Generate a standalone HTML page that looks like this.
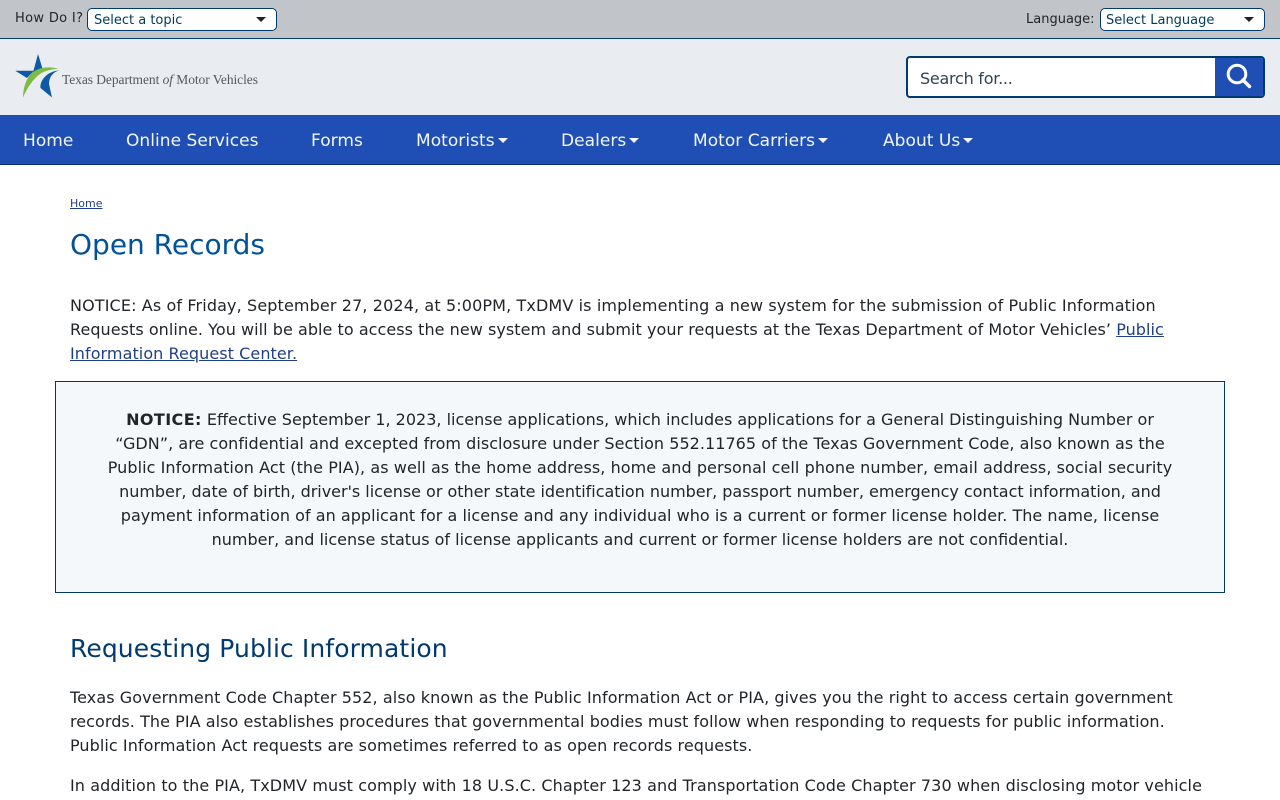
<!DOCTYPE html>
<html lang="en">
<head>
<meta charset="utf-8">
<title>Open Records</title>
<style>
html,body{margin:0;padding:0;background:#fff;width:1280px;height:800px;overflow:hidden}
body{font-family:"DejaVu Sans",Verdana,sans-serif;color:#212529;position:relative}
.a{position:absolute;white-space:nowrap}
.top{left:0;top:0;width:1280px;height:38px;background:#c1c5c9;border-bottom:1px solid #003a6e}
.hdr{left:0;top:39px;width:1280px;height:76px;background:#e9edf1}
.nav{left:0;top:115px;width:1280px;height:49px;background:#1f4eb5;border-bottom:1px solid #0f2f66}
.sel{background:#fff;border:1px solid #003a6e;border-radius:5px;box-sizing:border-box;height:23px;font-size:13px;line-height:23px;color:#003a5c;padding-left:6px}
.sel i{position:absolute;top:8px;width:0;height:0;border-left:5px solid transparent;border-right:5px solid transparent;border-top:5px solid #222}
.lbl{font-size:13px;line-height:18px;color:#212529}
.n{top:116px;font-size:17px;line-height:50px;color:#f2f7ff;letter-spacing:.04px}
.n i{display:inline-block;width:0;height:0;margin-left:3px;vertical-align:3px;border-left:5px solid transparent;border-right:5px solid transparent;border-top:5px solid #f2f7ff}
.t{font-size:16px;line-height:24px;color:#212529}
.c{left:55px;width:1170px;text-align:center}
a{color:#1f3f86;text-decoration:underline}
</style>
</head>
<body>
<div class="a top"></div>
<div class="a lbl" style="left:15px;top:10px;letter-spacing:.33px">How Do I?</div>
<div class="a sel" style="left:87px;top:8px;width:190px">Select a topic<i style="left:168px"></i></div>
<div class="a lbl" style="left:1026px;top:11px">Language:</div>
<div class="a sel" style="left:1100px;top:8px;width:165px;padding-left:5px">Select Language<i style="left:143px"></i></div>

<div class="a hdr"></div>
<svg class="a" style="left:0;top:0" width="70" height="110" viewBox="0 0 70 110">
<path fill="#0f5aa6" d="M38 54 L42.5 68.5 L33 72.5 Z"/>
<path fill="#0f5aa6" d="M15.2 70.7 L34 70.7 L27 78 Z"/>
<path fill="#0f5aa6" d="M59 70.5 C53 72 49 77 49 84 L52 97.5 L40.5 88 C39.5 80 48 71 59 70.5 Z"/>
<path fill="#7dbb42" d="M58.5 69 C50 66 40 67 33 72 C26 78 23 88 23 97.5 C27 88 33 79 40 74 C45 70.5 52 69 58.5 69 Z"/>
</svg>
<div class="a" style="left:62px;top:72px;font-family:'Liberation Serif',serif;font-size:13.5px;line-height:16px;color:#55595c;letter-spacing:-.07px">Texas Department <em>of</em> Motor Vehicles</div>

<div class="a" style="left:906px;top:56px;width:359px;height:42px;box-sizing:border-box;border:2px solid #003a6e;border-radius:4px;background:#fff;overflow:hidden">
<div class="a" style="left:12px;top:9px;font-size:16px;line-height:24px;color:#2f4356;letter-spacing:-.25px">Search for...</div>
<div class="a" style="left:307px;top:0;width:48px;height:38px;background:#1f4eb5"></div>
<svg class="a" style="left:318px;top:5px" width="27" height="27" viewBox="0 0 27 27"><circle cx="11" cy="11" r="8.8" fill="none" stroke="#fff" stroke-width="3"/><path d="M17 17 L23.5 23.5" stroke="#fff" stroke-width="3.4" stroke-linecap="round"/></svg>
</div>

<div class="a nav"></div>
<div class="a n" style="left:23px">Home</div>
<div class="a n" style="left:126px">Online Services</div>
<div class="a n" style="left:311px">Forms</div>
<div class="a n" style="left:416px">Motorists<i></i></div>
<div class="a n" style="left:561px">Dealers<i></i></div>
<div class="a n" style="left:693px">Motor Carriers<i></i></div>
<div class="a n" style="left:883px">About Us<i></i></div>

<a class="a" style="left:70px;top:197px;font-size:11px;line-height:14px" href="#">Home</a>
<div class="a" style="left:70px;top:226px;font-size:28px;line-height:38px;color:#00539b">Open Records</div>

<div class="a t" style="left:70px;top:294px;letter-spacing:.122px">NOTICE: As of Friday, September 27, 2024, at 5:00PM, TxDMV is implementing a new system for the submission of Public Information</div>
<div class="a t" style="left:70px;top:318px;letter-spacing:.046px">Requests online. You will be able to access the new system and submit your requests at the Texas Department of Motor Vehicles’ <a href="#">Public</a></div>
<div class="a t" style="left:70px;top:342px;letter-spacing:.07px"><a href="#">Information Request Center.</a></div>

<div class="a" style="left:55px;top:381px;width:1170px;height:212px;box-sizing:border-box;background:#f4f8fb;border:1px solid #003a5c"></div>
<div class="a t c" style="top:408px"><b style="letter-spacing:.4px">NOTICE:</b> Effective September 1, 2023, license applications, which includes applications for a General Distinguishing Number or</div>
<div class="a t c" style="top:432px;letter-spacing:.04px">“GDN”, are confidential and excepted from disclosure under Section 552.11765 of the Texas Government Code, also known as the</div>
<div class="a t c" style="top:456px;letter-spacing:.07px">Public Information Act (the PIA), as well as the home address, home and personal cell phone number, email address, social security</div>
<div class="a t c" style="top:480px;letter-spacing:-.023px">number, date of birth, driver's license or other state identification number, passport number, emergency contact information, and</div>
<div class="a t c" style="top:504px;letter-spacing:.03px">payment information of an applicant for a license and any individual who is a current or former license holder. The name, license</div>
<div class="a t c" style="top:528px">number, and license status of license applicants and current or former license holders are not confidential.</div>

<div class="a" style="left:70px;top:632px;font-size:25px;line-height:34px;color:#003a6e;letter-spacing:.1px">Requesting Public Information</div>
<div class="a t" style="left:70px;top:686px;letter-spacing:.083px">Texas Government Code Chapter 552, also known as the Public Information Act or PIA, gives you the right to access certain government</div>
<div class="a t" style="left:70px;top:710px;letter-spacing:.052px">records. The PIA also establishes procedures that governmental bodies must follow when responding to requests for public information.</div>
<div class="a t" style="left:70px;top:734px;letter-spacing:.07px">Public Information Act requests are sometimes referred to as open records requests.</div>
<div class="a t" style="left:70px;top:774px;letter-spacing:.09px">In addition to the PIA, TxDMV must comply with 18 U.S.C. Chapter 123 and Transportation Code Chapter 730 when disclosing motor vehicle</div>
</body>
</html>
